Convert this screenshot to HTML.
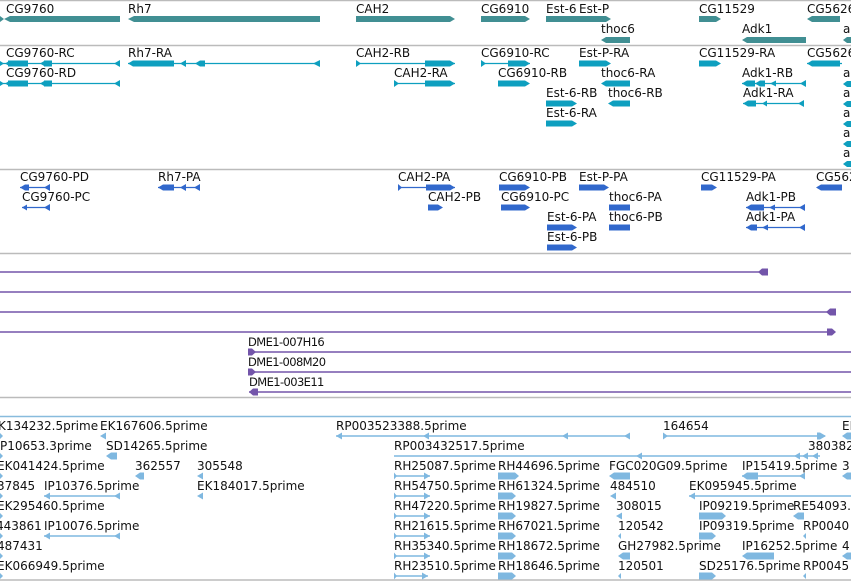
<!DOCTYPE html>
<html><head><meta charset="utf-8"><style>
html,body{margin:0;padding:0;background:#fff;width:851px;height:581px;overflow:hidden}
svg{display:block}
text{font-family:"DejaVu Sans","Liberation Sans",sans-serif;font-size:12px;fill:#111}
.g{fill:#418f93}.t{fill:#0e9fbf}.p{fill:#3168cc}.e{fill:#7fb8e0}.v{fill:#7355aa}
.tl{stroke:#0e9fbf;stroke-width:1.3}.pl{stroke:#3168cc;stroke-width:1.3}.el{stroke:#7fb8e0;stroke-width:1.5}.vl{stroke:#7355aa;stroke-width:1.5}
.sep{stroke:#bbb;stroke-width:1.5}
.d{font-size:11.5px;letter-spacing:-0.6px}
</style></head><body>
<svg width="851" height="581" viewBox="0 0 851 581" xmlns="http://www.w3.org/2000/svg">
<line class="sep" x1="0" y1="0.5" x2="851" y2="0.5"/>
<line class="sep" x1="0" y1="45.5" x2="851" y2="45.5"/>
<line class="sep" x1="0" y1="169.5" x2="851" y2="169.5"/>
<line class="sep" x1="0" y1="253.5" x2="851" y2="253.5"/>
<line class="sep" x1="0" y1="397.5" x2="851" y2="397.5"/>
<line x1="0" y1="416.5" x2="851" y2="416.5" stroke="#88bbdd" stroke-width="1.5"/>
<line class="sep" x1="0" y1="580" x2="851" y2="580"/>

<!-- gene track -->
<text x="6" y="13">CG9760</text><polygon class="g" points="0,16 4,19 10,16 120,16 120,22 10,22 4,19 0,22"/>
<text x="128" y="13">Rh7</text><polygon class="g" points="128,19 134,16 320,16 320,22 134,22"/>
<text x="356" y="13">CAH2</text><polygon class="g" points="356,16 450,16 455,19 450,22 356,22"/>
<text x="481" y="13">CG6910</text><polygon class="g" points="481,16 525,16 530,19 525,22 481,22"/>
<text x="546" y="13">Est-6</text><polygon class="g" points="546,16 579,16 579,22 546,22"/>
<text x="579" y="13">Est-P</text><polygon class="g" points="579,16 606,16 611,19 606,22 579,22"/>
<text x="601" y="33">thoc6</text><polygon class="g" points="601,40 606,37 630,37 630,43 606,43"/>
<text x="699" y="13">CG11529</text><polygon class="g" points="699,16 716,16 721,19 716,22 699,22"/>
<text x="742" y="33">Adk1</text><polygon class="g" points="742,40 747,37 806,37 806,43 747,43"/>
<text x="807" y="13">CG5626</text><polygon class="g" points="807,19 812,16 840,16 840,22 812,22"/>
<text x="843" y="33">a</text><polygon class="g" points="843,40 847,37 851,37 851,43 847,43"/>

<!-- transcript track -->
<text x="6" y="57">CG9760-RC</text>
<line class="tl" x1="0" y1="63.5" x2="120" y2="63.5"/><polygon class="t" points="0,61 4,63.5 0,66"/><rect class="t" x="8" y="60.5" width="20" height="6"/><polygon class="t" points="5,63.5 10,60.5 10,66.5"/><rect class="t" x="44" y="60.5" width="8" height="6"/><polygon class="t" points="40,63.5 45,60.5 45,66.5"/><polygon class="t" points="114,63.5 120,60 120,67"/>
<text x="6" y="77">CG9760-RD</text>
<line class="tl" x1="0" y1="83.5" x2="120" y2="83.5"/><polygon class="t" points="0,81 4,83.5 0,86"/><rect class="t" x="8" y="80.5" width="20" height="6"/><polygon class="t" points="5,83.5 10,80.5 10,86.5"/><rect class="t" x="44" y="80.5" width="8" height="6"/><polygon class="t" points="40,83.5 45,80.5 45,86.5"/><polygon class="t" points="114,83.5 120,80 120,87"/>
<text x="128" y="57">Rh7-RA</text>
<line class="tl" x1="128" y1="63.5" x2="320" y2="63.5"/><polygon class="t" points="128,63.5 133,60.5 174,60.5 174,66.5 133,66.5"/><polygon class="t" points="180,63.5 186,60 186,67"/><polygon class="t" points="195,63.5 200,60.5 205,60.5 205,66.5 200,66.5"/><polygon class="t" points="313,63.5 320,60 320,67"/>
<text x="356" y="57">CAH2-RB</text>
<line class="tl" x1="356" y1="63.5" x2="455" y2="63.5"/><polygon class="t" points="356,60 361,63.5 356,67"/><polygon class="t" points="425,60.5 450,60.5 455,63.5 450,66.5 425,66.5"/>
<text x="394" y="77">CAH2-RA</text>
<line class="tl" x1="394" y1="83.5" x2="455" y2="83.5"/><polygon class="t" points="394,80 399,83.5 394,87"/><polygon class="t" points="425,80.5 450,80.5 455,83.5 450,86.5 425,86.5"/>
<text x="481" y="57">CG6910-RC</text>
<line class="tl" x1="481" y1="63.5" x2="530" y2="63.5"/><polygon class="t" points="481,60 486,63.5 481,67"/><polygon class="t" points="508,60.5 525,60.5 530,63.5 525,66.5 508,66.5"/>
<text x="498" y="77">CG6910-RB</text><polygon class="t" points="498,80.5 525,80.5 530,83.5 525,86.5 498,86.5"/>
<text x="579" y="57">Est-P-RA</text><polygon class="t" points="579,60.5 606,60.5 611,63.5 606,66.5 579,66.5"/>
<text x="601" y="77">thoc6-RA</text><polygon class="t" points="601,83.5 606,80.5 630,80.5 630,86.5 606,86.5"/>
<text x="546" y="97">Est-6-RB</text><polygon class="t" points="546,100.5 572,100.5 577,103.5 572,106.5 546,106.5"/>
<text x="608" y="97">thoc6-RB</text><polygon class="t" points="608,103.5 613,100.5 630,100.5 630,106.5 613,106.5"/>
<text x="546" y="117">Est-6-RA</text><polygon class="t" points="546,120.5 572,120.5 577,123.5 572,126.5 546,126.5"/>
<text x="699" y="57">CG11529-RA</text><polygon class="t" points="699,60.5 716,60.5 721,63.5 716,66.5 699,66.5"/>
<text x="807" y="57">CG5626</text><line class="tl" x1="807" y1="63.5" x2="842" y2="63.5"/><polygon class="t" points="807,63.5 812,60.5 840,60.5 840,66.5 812,66.5"/>
<text x="742" y="77">Adk1-RB</text><line class="tl" x1="742" y1="83.5" x2="806" y2="83.5"/><polygon class="t" points="742,83.5 747,80.5 755,80.5 755,86.5 747,86.5"/><polygon class="t" points="755,83.5 760,80.5 765,80.5 765,86.5 760,86.5"/><polygon class="t" points="770,83.5 776,80.5 776,86.5"/><polygon class="t" points="800,83.5 806,80 806,87"/>
<text x="743" y="97">Adk1-RA</text><line class="tl" x1="743" y1="103.5" x2="804" y2="103.5"/><polygon class="t" points="743,103.5 748,100.5 756,100.5 756,106.5 748,106.5"/><polygon class="t" points="762,103.5 767,100.5 767,106.5"/><polygon class="t" points="798,103.5 804,100 804,107"/>
<text x="843" y="77">a</text><polygon class="t" points="843,84 847,81 851,81 851,87 847,87"/>
<text x="843" y="97">a</text><polygon class="t" points="843,104 847,101 851,101 851,107 847,107"/>
<text x="843" y="117">a</text><polygon class="t" points="843,124 847,121 851,121 851,127 847,127"/>
<text x="843" y="137">a</text><polygon class="t" points="843,144 847,141 851,141 851,147 847,147"/>
<text x="843" y="157">a</text><polygon class="t" points="843,164 847,161 851,161 851,167 847,167"/>

<!-- protein track -->
<text x="20" y="181">CG9760-PD</text><line class="pl" x1="20" y1="187.5" x2="50" y2="187.5"/><polygon class="p" points="20,187.5 25,184.5 29,184.5 29,190.5 25,190.5"/><polygon class="p" points="44,187.5 50,184 50,191"/>
<text x="22" y="201">CG9760-PC</text><line class="pl" x1="22" y1="207.5" x2="50" y2="207.5"/><polygon class="p" points="22,207.5 27,204.5 27,210.5"/><polygon class="p" points="44,207.5 50,204 50,211"/>
<text x="158" y="181">Rh7-PA</text><line class="pl" x1="158" y1="187.5" x2="200" y2="187.5"/><polygon class="p" points="158,187.5 163,184.5 174,184.5 174,190.5 163,190.5"/><polygon class="p" points="180,187.5 186,184 186,191"/><polygon class="p" points="194,187.5 200,184 200,191"/>
<text x="398" y="181">CAH2-PA</text><line class="pl" x1="398" y1="187.5" x2="455" y2="187.5"/><polygon class="p" points="398,184 402,187.5 398,191"/><polygon class="p" points="426,184.5 450,184.5 455,187.5 450,190.5 426,190.5"/>
<text x="428" y="201">CAH2-PB</text><polygon class="p" points="428,204.5 438,204.5 443,207.5 438,210.5 428,210.5"/>
<text x="499" y="181">CG6910-PB</text><polygon class="p" points="499,184.5 525,184.5 530,187.5 525,190.5 499,190.5"/>
<text x="501" y="201">CG6910-PC</text><polygon class="p" points="501,204.5 525,204.5 530,207.5 525,210.5 501,210.5"/>
<text x="579" y="181">Est-P-PA</text><polygon class="p" points="579,184.5 604,184.5 609,187.5 604,190.5 579,190.5"/>
<text x="609" y="201">thoc6-PA</text><polygon class="p" points="609,204.5 630,204.5 630,210.5 609,210.5"/>
<text x="547" y="221">Est-6-PA</text><polygon class="p" points="547,224.5 572,224.5 577,227.5 572,230.5 547,230.5"/>
<text x="609" y="221">thoc6-PB</text><polygon class="p" points="609,224.5 630,224.5 630,230.5 609,230.5"/>
<text x="547" y="241">Est-6-PB</text><polygon class="p" points="547,244.5 572,244.5 577,247.5 572,250.5 547,250.5"/>
<text x="701" y="181">CG11529-PA</text><polygon class="p" points="701,184.5 712,184.5 717,187.5 712,190.5 701,190.5"/>
<text x="816" y="181">CG562</text><polygon class="p" points="816,187.5 821,184.5 842,184.5 842,190.5 821,190.5"/>
<text x="746" y="201">Adk1-PB</text><line class="pl" x1="746" y1="207.5" x2="805" y2="207.5"/><polygon class="p" points="746,207.5 751,204.5 764,204.5 764,210.5 751,210.5"/><polygon class="p" points="769,207.5 775,204.5 775,210.5"/><polygon class="p" points="799,207.5 805,204 805,211"/>
<text x="746" y="221">Adk1-PA</text><line class="pl" x1="746" y1="227.5" x2="805" y2="227.5"/><polygon class="p" points="746,227.5 751,224.5 757,224.5 757,230.5 751,230.5"/><polygon class="p" points="762,227.5 768,224.5 768,230.5"/><polygon class="p" points="799,227.5 805,224 805,231"/>

<!-- purple track -->
<line class="vl" x1="0" y1="272" x2="766" y2="272"/><polygon class="v" points="758,272 762,268.5 768,268.5 768,275.5 762,275.5"/>
<line class="vl" x1="0" y1="292" x2="851" y2="292"/>
<line class="vl" x1="0" y1="312" x2="835" y2="312"/><polygon class="v" points="826,312 830,308.5 836,308.5 836,315.5 830,315.5"/>
<line class="vl" x1="0" y1="332" x2="834" y2="332"/><polygon class="v" points="827,328.5 832,328.5 836,332 832,335.5 827,335.5"/>
<text class="d" x="248" y="346">DME1-007H16</text><line class="vl" x1="248" y1="352" x2="851" y2="352"/><polygon class="v" points="248,348.5 252,348.5 256,352 252,355.5 248,355.5"/>
<text class="d" x="248" y="366">DME1-008M20</text><line class="vl" x1="248" y1="372" x2="851" y2="372"/><polygon class="v" points="248,368.5 252,368.5 256,372 252,375.5 248,375.5"/>
<text class="d" x="249" y="386">DME1-003E11</text><line class="vl" x1="249" y1="392" x2="851" y2="392"/><polygon class="v" points="249,392 253,388.5 258,388.5 258,395.5 253,395.5"/>

<!-- EST track -->
<text x="-2" y="430">K134232.5prime</text><polygon class="e" points="0,433 3,436 0,439"/>
<text x="100" y="430">EK167606.5prime</text><polygon class="e" points="100,436 106,432.5 106,439.5"/>
<text x="0" y="450">P10653.3prime</text><polygon class="e" points="0,453 3,456 0,459"/>
<text x="106" y="450">SD14265.5prime</text><polygon class="e" points="106,456 111,452.5 117,452.5 117,459.5 111,459.5"/>
<text x="-3" y="470">EK041424.5prime</text><polygon class="e" points="0,473 3,476 0,479"/>
<text x="135" y="470">362557</text><polygon class="e" points="135,476 140,472.5 144,472.5 144,479.5 140,479.5"/>
<text x="197" y="470">305548</text><polygon class="e" points="197,476 203,472.5 203,479.5"/>
<text x="-3" y="490">37845</text><polygon class="e" points="0,493 3,496 0,499"/>
<text x="44" y="490">IP10376.5prime</text><line class="el" x1="44" y1="496" x2="120" y2="496"/><polygon class="e" points="44,496 50,492.5 50,499.5"/><polygon class="e" points="114,496 120,492.5 120,499.5"/>
<text x="197" y="490">EK184017.5prime</text><polygon class="e" points="197,496 203,492.5 203,499.5"/>
<text x="-3" y="510">EK295460.5prime</text><polygon class="e" points="0,513 3,516 0,519"/>
<text x="-4" y="530">443861</text><polygon class="e" points="0,533 3,536 0,539"/>
<text x="44" y="530">IP10076.5prime</text><line class="el" x1="44" y1="536" x2="120" y2="536"/><polygon class="e" points="44,536 50,532.5 50,539.5"/><polygon class="e" points="114,536 120,532.5 120,539.5"/>
<text x="-3" y="550">487431</text><polygon class="e" points="0,553 3,556 0,559"/>
<text x="-3" y="570">EK066949.5prime</text><polygon class="e" points="0,573 3,576 0,579"/>

<text x="336" y="430">RP003523388.5prime</text><line class="el" x1="336" y1="436" x2="630" y2="436"/><polygon class="e" points="336,436 342,432.5 342,439.5"/><polygon class="e" points="423,436 429,432.5 429,439.5"/><polygon class="e" points="562,436 568,432.5 568,439.5"/><polygon class="e" points="624,436 630,432.5 630,439.5"/>
<text x="663" y="430">164654</text><line class="el" x1="663" y1="436" x2="825" y2="436"/><polygon class="e" points="663,432.5 668,436 663,439.5"/><polygon class="e" points="817,432.5 820,432.5 826,436 820,439.5 817,439.5"/>
<text x="842" y="430">EI</text><polygon class="e" points="842,436 847,432.5 851,432.5 851,439.5 847,439.5"/>
<text x="394" y="450">RP003432517.5prime</text><line class="el" x1="394" y1="456" x2="820" y2="456"/><polygon class="e" points="636,456 642,452.5 642,459.5"/><polygon class="e" points="794,456 800,452.5 800,459.5"/><polygon class="e" points="802,456 808,452.5 808,459.5"/><polygon class="e" points="812,456 818,452.5 818,459.5"/>
<text x="808" y="450">380382</text>
<text x="394" y="470">RH25087.5prime</text><line class="el" x1="394" y1="476" x2="430" y2="476"/><polygon class="e" points="394,472.5 397,476 394,479.5"/><polygon class="e" points="424,472.5 430,476 424,479.5"/>
<text x="498" y="470">RH44696.5prime</text><polygon class="e" points="498,472.5 515,472.5 519,476 515,479.5 498,479.5"/>
<text x="609" y="470">FGC020G09.5prime</text><polygon class="e" points="609,476 614,472.5 630,472.5 630,479.5 614,479.5"/>
<text x="742" y="470">IP15419.5prime</text><line class="el" x1="742" y1="476" x2="805" y2="476"/><polygon class="e" points="742,476 747,472.5 758,472.5 758,479.5 747,479.5"/><polygon class="e" points="799,476 805,472.5 805,479.5"/>
<text x="842" y="470">3</text><polygon class="e" points="842,476 847,472.5 851,472.5 851,479.5 847,479.5"/>
<text x="394" y="490">RH54750.5prime</text><line class="el" x1="394" y1="496" x2="430" y2="496"/><polygon class="e" points="394,492.5 397,496 394,499.5"/><polygon class="e" points="424,492.5 430,496 424,499.5"/>
<text x="498" y="490">RH61324.5prime</text><polygon class="e" points="498,492.5 512,492.5 516,496 512,499.5 498,499.5"/>
<text x="610" y="490">484510</text><polygon class="e" points="610,496 616,492.5 616,499.5"/>
<text x="689" y="490">EK095945.5prime</text><line class="el" x1="689" y1="496" x2="851" y2="496"/><polygon class="e" points="689,496 695,492.5 695,499.5"/>
<text x="394" y="510">RH47220.5prime</text><line class="el" x1="394" y1="516" x2="430" y2="516"/><polygon class="e" points="394,512.5 397,516 394,519.5"/><polygon class="e" points="424,512.5 430,516 424,519.5"/>
<text x="498" y="510">RH19827.5prime</text><polygon class="e" points="498,512.5 512,512.5 516,516 512,519.5 498,519.5"/>
<text x="616" y="510">308015</text><polygon class="e" points="616,516 622,512.5 622,519.5"/>
<text x="699" y="510">IP09219.5prime</text><polygon class="e" points="699,512.5 722,512.5 726,516 722,519.5 699,519.5"/>
<text x="793" y="510">RE54093.</text><polygon class="e" points="793,516 798,512.5 804,512.5 804,519.5 798,519.5"/>
<text x="394" y="530">RH21615.5prime</text><line class="el" x1="394" y1="536" x2="430" y2="536"/><polygon class="e" points="394,532.5 397,536 394,539.5"/><polygon class="e" points="424,532.5 430,536 424,539.5"/>
<text x="498" y="530">RH67021.5prime</text><polygon class="e" points="498,532.5 512,532.5 516,536 512,539.5 498,539.5"/>
<text x="618" y="530">120542</text><polygon class="e" points="618,536 621,533 621,539"/>
<text x="699" y="530">IP09319.5prime</text><polygon class="e" points="699,532.5 712,532.5 716,536 712,539.5 699,539.5"/>
<text x="803" y="530">RP0040</text><polygon class="e" points="803,536 806,533 806,539"/>
<text x="394" y="550">RH35340.5prime</text><line class="el" x1="394" y1="556" x2="430" y2="556"/><polygon class="e" points="394,552.5 397,556 394,559.5"/><polygon class="e" points="424,552.5 430,556 424,559.5"/>
<text x="498" y="550">RH18672.5prime</text><polygon class="e" points="498,552.5 512,552.5 516,556 512,559.5 498,559.5"/>
<text x="618" y="550">GH27982.5prime</text><polygon class="e" points="618,556 623,552.5 630,552.5 630,559.5 623,559.5"/>
<text x="742" y="550">IP16252.5prime</text><polygon class="e" points="742,556 747,552.5 774,552.5 774,559.5 747,559.5"/>
<text x="842" y="550">4</text><polygon class="e" points="842,556 847,552.5 851,552.5 851,559.5 847,559.5"/>
<text x="394" y="570">RH23510.5prime</text><line class="el" x1="394" y1="576" x2="428" y2="576"/><polygon class="e" points="394,572.5 397,576 394,579.5"/><polygon class="e" points="422,572.5 428,576 422,579.5"/>
<text x="498" y="570">RH18646.5prime</text><polygon class="e" points="498,572.5 512,572.5 516,576 512,579.5 498,579.5"/>
<text x="618" y="570">120501</text><polygon class="e" points="618,576 621,573 621,579"/>
<text x="699" y="570">SD25176.5prime</text><polygon class="e" points="699,572.5 712,572.5 716,576 712,579.5 699,579.5"/>
<text x="803" y="570">RP0045</text><polygon class="e" points="803,576 806,573 806,579"/>
</svg>
</body></html>
